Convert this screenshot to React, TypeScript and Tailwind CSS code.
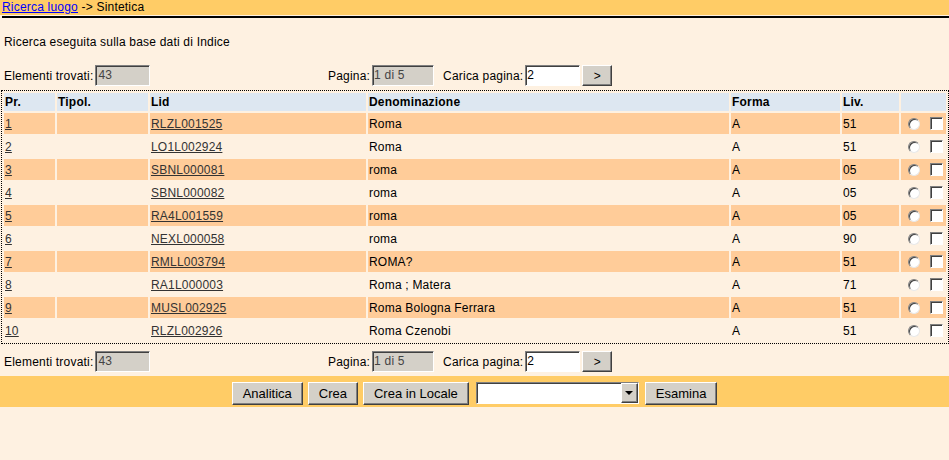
import React from "react";

type Row = {
  pr: number;
  lid: string;
  den: string;
  forma: string;
  liv: string;
};

const rows: Row[] = [
  { pr: 1, lid: "RLZL001525", den: "Roma", forma: "A", liv: "51" },
  { pr: 2, lid: "LO1L002924", den: "Roma", forma: "A", liv: "51" },
  { pr: 3, lid: "SBNL000081", den: "roma", forma: "A", liv: "05" },
  { pr: 4, lid: "SBNL000082", den: "roma", forma: "A", liv: "05" },
  { pr: 5, lid: "RA4L001559", den: "roma", forma: "A", liv: "05" },
  { pr: 6, lid: "NEXL000058", den: "roma", forma: "A", liv: "90" },
  { pr: 7, lid: "RMLL003794", den: "ROMA?", forma: "A", liv: "51" },
  { pr: 8, lid: "RA1L000003", den: "Roma ; Matera", forma: "A", liv: "71" },
  { pr: 9, lid: "MUSL002925", den: "Roma Bologna Ferrara", forma: "A", liv: "51" },
  { pr: 10, lid: "RLZL002926", den: "Roma Czenobi", forma: "A", liv: "51" },
];

const inset =
  "border border-t-[#808080] border-l-[#808080] border-b-white border-r-white shadow-[inset_1px_1px_0_#404040]";
const outset =
  "border border-t-white border-l-white border-b-[#404040] border-r-[#404040] shadow-[inset_-1px_-1px_0_#808080]";

const Counter = ({ showPager }: { showPager: boolean }) => (
  <div className="flex items-center h-[21px] pl-[4px]">
    <div className="flex items-center w-[324px]">
      <span>Elementi trovati:</span>
      <div className={`ml-[2px] w-[55px] h-[21px] bg-[#d4d0c8] text-[#444] pl-[2px] leading-[19px] ${inset}`}>
        43
      </div>
    </div>
    {showPager && (
      <div className="flex items-center">
        <span>Pagina:</span>
        <div className={`ml-[2px] w-[62px] h-[21px] bg-[#d4d0c8] text-[#444] pl-[1px] leading-[19px] ${inset}`}>
          1 di 5
        </div>
        <span className="ml-[9px]">Carica pagina:</span>
        <div className={`ml-[2px] w-[55px] h-[21px] bg-white pl-[1px] leading-[19px] ${inset}`}>2</div>
        <button className={`ml-[2px] w-[30px] h-[21px] bg-[#d4d0c8] text-[12px] leading-none ${outset}`}>
          &gt;
        </button>
      </div>
    )}
  </div>
);

const Radio = () => (
  <span className="inline-block w-[12px] h-[12px] rounded-full bg-white border border-t-[#808080] border-l-[#808080] border-b-[#e8e8e8] border-r-[#e8e8e8] shadow-[inset_1px_1px_0_#404040]" />
);

const Check = () => (
  <span className={`inline-block w-[13px] h-[13px] bg-white ${inset}`} />
);

export default function App() {
  return (
    <div className="min-h-screen bg-[#fef1e1] text-[12px] tracking-[0.2px] text-black font-['Liberation_Sans',Arial,sans-serif]">
      <div className="h-[15px] bg-[#ffcc66] leading-[15px] pl-[2px]">
        <a href="#" className="text-[#0000ff] underline">
          Ricerca luogo
        </a>
        <span> -&gt; Sintetica</span>
      </div>
      <div className="h-[2px] mt-px ml-[2px] bg-black" />

      <div className="pl-[4px] mt-[17px] leading-[14px]">Ricerca eseguita sulla base dati di Indice</div>

      <div className="mt-[16px]">
        <Counter showPager />
      </div>

      <table className="mt-[4px] ml-px w-[948px] table-fixed border-separate border-spacing-[2px] border border-dotted border-black">
        <colgroup>
          <col className="w-[51px]" />
          <col className="w-[91px]" />
          <col className="w-[216px]" />
          <col className="w-[361px]" />
          <col className="w-[109px]" />
          <col className="w-[57px]" />
          <col />
        </colgroup>
        <thead>
          <tr className="h-[17px] bg-[#dde7f1] font-bold text-left">
            <th className="px-px py-0 font-bold">Pr.</th>
            <th className="px-px py-0 font-bold">Tipol.</th>
            <th className="px-px py-0 font-bold">Lid</th>
            <th className="px-px py-0 font-bold">Denominazione</th>
            <th className="px-px py-0 font-bold">Forma</th>
            <th className="px-px py-0 font-bold">Liv.</th>
            <th />
          </tr>
        </thead>
        <tbody>
          {rows.map((r) => (
            <tr key={r.pr} className={`h-[21px] ${r.pr % 2 === 1 ? "bg-[#ffcc99]" : "bg-[#fef1e1]"}`}>
              <td className="px-px py-0">
                <a href="#" className="text-[#333] underline">
                  {r.pr}
                </a>
              </td>
              <td />
              <td className="px-px py-0">
                <a href="#" className="text-[#333] underline">
                  {r.lid}
                </a>
              </td>
              <td className="px-px py-0">{r.den}</td>
              <td className="px-px py-0">{r.forma}</td>
              <td className="px-px py-0">{r.liv}</td>
              <td className="py-0">
                <div className="flex items-center pl-[7px] gap-[10px]">
                  <Radio />
                  <Check />
                </div>
              </td>
            </tr>
          ))}
        </tbody>
      </table>

      <div className="mt-[7px]">
        <Counter showPager />
      </div>

      <div className="mt-[4px] h-[31px] bg-[#ffcc66] flex items-start pt-[6px] justify-center gap-[5px] text-[13px] tracking-normal">
        <button className={`h-[23px] px-[10px] bg-[#d4d0c8] ${outset}`}>Analitica</button>
        <button className={`h-[23px] px-[10px] bg-[#d4d0c8] ${outset}`}>Crea</button>
        <button className={`h-[23px] px-[10px] bg-[#d4d0c8] ${outset}`}>Crea in Locale</button>
        <div className={`ml-[2px] w-[163px] h-[22px] bg-white flex justify-end ${inset}`}>
          <div className={`w-[17px] h-full bg-[#d4d0c8] flex items-center justify-center ${outset}`}>
            <span className="w-0 h-0 border-l-[4px] border-r-[4px] border-t-[4px] border-l-transparent border-r-transparent border-t-black" />
          </div>
        </div>
        <button className={`ml-[1px] h-[23px] px-[10px] bg-[#d4d0c8] ${outset}`}>Esamina</button>
      </div>
    </div>
  );
}
